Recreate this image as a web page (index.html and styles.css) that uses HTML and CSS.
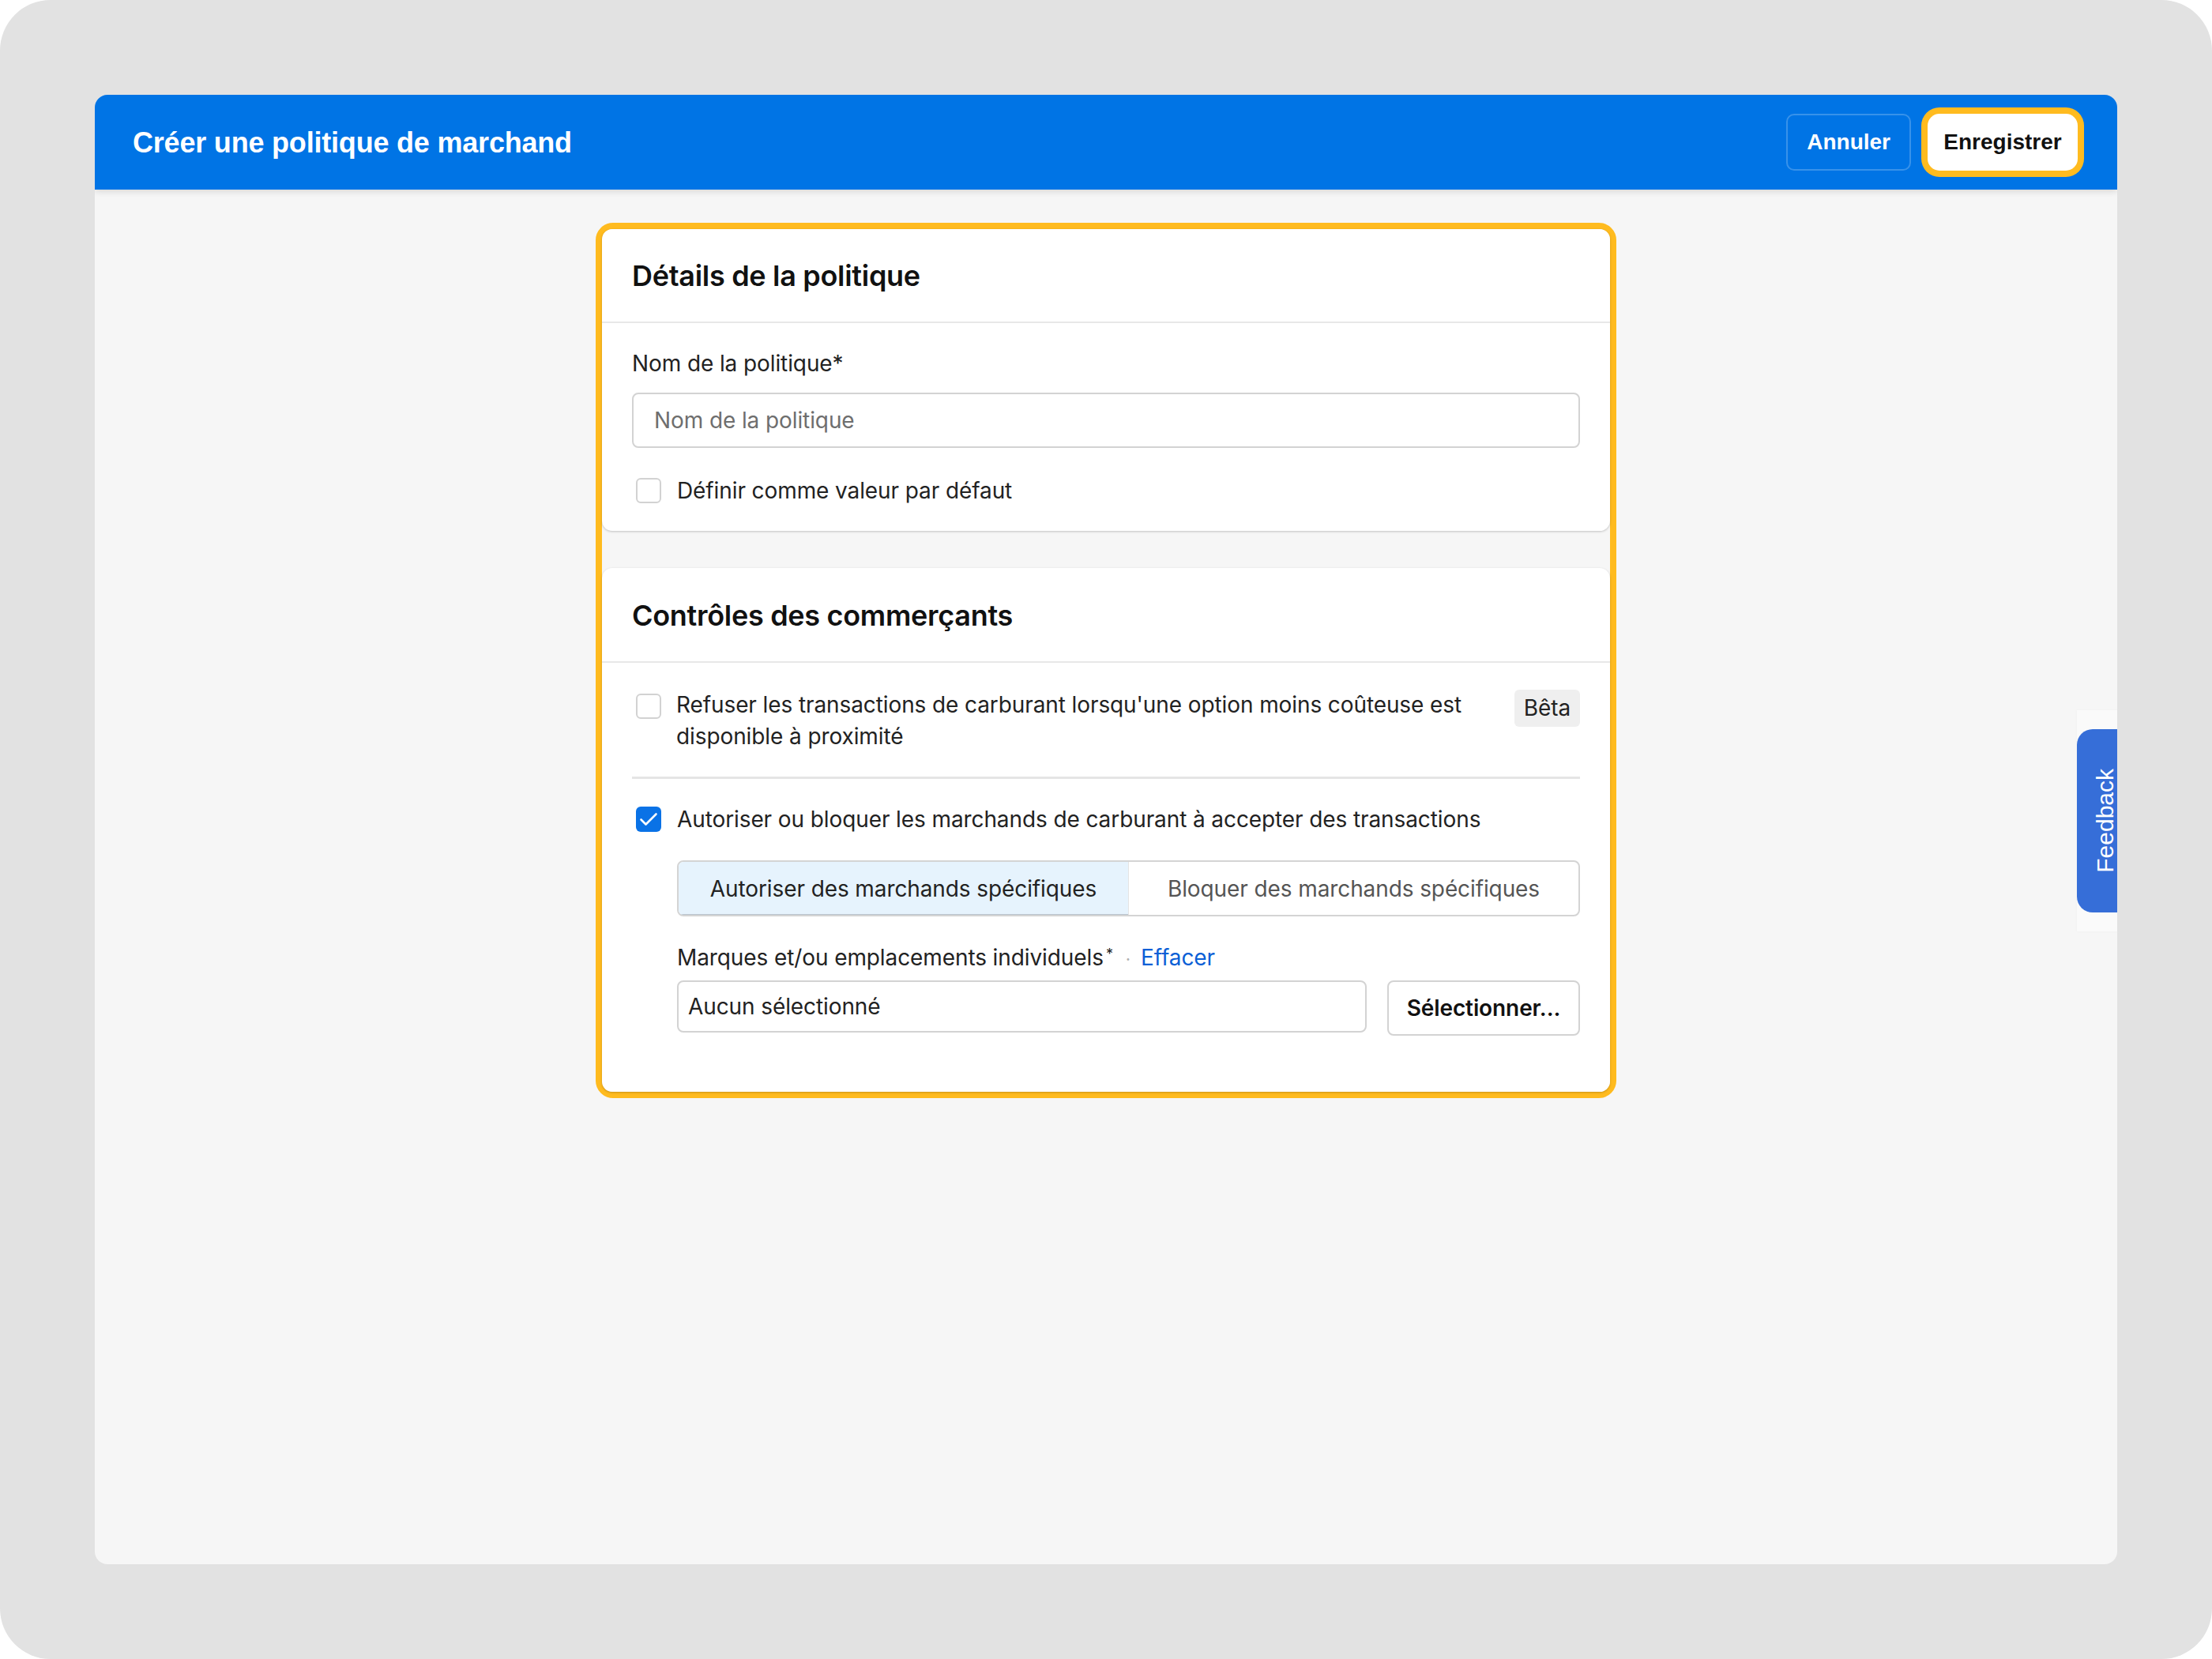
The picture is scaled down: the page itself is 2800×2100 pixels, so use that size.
FILE: index.html
```html
<!DOCTYPE html>
<html lang="fr">
<head>
<meta charset="utf-8">
<title>Créer une politique de marchand</title>
<link rel="stylesheet" href="styles.css">
</head>
<body>
<div class="frame">
  <div class="window">
    <header class="topbar">
      <h1 class="topbar-title">Créer une politique de marchand</h1>
      <div class="actions">
        <button class="btn btn-ghost">Annuler</button>
        <button class="btn btn-save">Enregistrer</button>
      </div>
    </header>

    <main class="content">
      <div class="highlight">
        <section class="card">
          <div class="card-head"><h2>Détails de la politique</h2></div>
          <div class="card-body details-body">
            <div class="field-label">Nom de la politique*</div>
            <div class="text-input placeholder">Nom de la politique</div>
            <div class="check-row default-row">
              <span class="cb"></span>
              <span class="check-text">Définir comme valeur par défaut</span>
            </div>
          </div>
        </section>

        <section class="card card-controls">
          <div class="card-head"><h2>Contrôles des commerçants</h2></div>
          <div class="card-body controls-body">
            <div class="beta-row">
              <span class="cb cb-top"></span>
              <span class="beta-text">Refuser les transactions de carburant lorsqu'une option moins coûteuse est disponible à proximité</span>
              <span class="badge">Bêta</span>
            </div>
            <div class="divider"></div>
            <div class="check-row allow-row">
              <span class="cb cb-checked">
                <svg viewBox="0 0 32 32" width="32" height="32"><polyline points="6.5,16.5 12.5,22.5 25.5,9.5" fill="none" stroke="#fff" stroke-width="2.6" stroke-linecap="round" stroke-linejoin="round"/></svg>
              </span>
              <span class="check-text">Autoriser ou bloquer les marchands de carburant à accepter des transactions</span>
            </div>
            <div class="sub">
              <div class="segmented">
                <div class="seg seg-active">Autoriser des marchands spécifiques</div>
                <div class="seg">Bloquer des marchands spécifiques</div>
              </div>
              <div class="brand-label">Marques et/ou emplacements individuels<sup class="req">*</sup><span class="sep">·</span><span class="link">Effacer</span></div>
              <div class="select-row">
                <div class="text-input select-input">Aucun sélectionné</div>
                <button class="btn-select">Sélectionner...</button>
              </div>
            </div>
          </div>
        </section>
      </div>
    </main>

    <div class="feedback-panel">
      <div class="feedback-tab"><span>Feedback</span></div>
    </div>
  </div>
</div>
</body>
</html>
```

FILE: styles.css
```css
* { box-sizing: border-box; }

html, body {
  margin: 0;
  padding: 0;
  background: #ffffff;
}

body {
  font-family: Inter, "Noto Sans", sans-serif;
  color: #1f1f1f;
  letter-spacing: -0.1px;
}

.frame {
  width: 2800px;
  height: 2100px;
  background: #e2e2e2;
  border-radius: 64px;
  padding: 120px;
}

.window {
  position: relative;
  width: 2560px;
  height: 1860px;
  background: #f6f6f6;
  border-radius: 16px;
  overflow: hidden;
}

/* ---------- top bar ---------- */
.topbar {
  height: 120px;
  background: #0074e5;
  display: flex;
  align-items: center;
  justify-content: space-between;
  padding: 0 50px 0 48px;
  box-shadow: 0 2px 8px rgba(0, 0, 0, 0.14);
  position: relative;
  z-index: 1;
}

.topbar-title {
  margin: 0;
  padding-top: 2px;
  font-family: "Liberation Sans", Arial, sans-serif;
  font-weight: 700;
  font-size: 36px;
  color: #ffffff;
  letter-spacing: -0.2px;
}

.actions {
  display: flex;
  align-items: center;
  gap: 21px;
}

.btn {
  height: 72px;
  font-family: "Liberation Sans", Arial, sans-serif;
  font-weight: 700;
  font-size: 28px;
  letter-spacing: 0;
  cursor: pointer;
}

.btn-ghost {
  padding: 0 24px;
  background: transparent;
  color: #ffffff;
  border: 2px solid rgba(255, 255, 255, 0.22);
  border-radius: 10px;
}

.btn-save {
  width: 190px;
  padding: 0;
  background: #ffffff;
  color: #111111;
  border: none;
  border-radius: 15px;
  box-shadow: 0 0 0 8px #ffbb1f;
}

/* ---------- content ---------- */
.content {
  padding-top: 42px;
}

.highlight {
  width: 1292px;
  margin: 0 auto;
  border: 8px solid #ffbb1f;
  border-radius: 22px;
  background: #f6f6f6;
  display: flex;
  flex-direction: column;
  gap: 47px;
}

.card {
  background: #ffffff;
  border-radius: 13px;
  box-shadow: 0 1px 3px rgba(0, 0, 0, 0.22);
}

.card-head {
  height: 119px;
  padding: 0 38px;
  display: flex;
  align-items: center;
  border-bottom: 2px solid #e8e8e8;
}

.card-head h2 {
  margin: 0;
  font-size: 36px;
  font-weight: 600;
  color: #111111;
  letter-spacing: -0.3px;
}

.card-controls .card-head {
  height: 120px;
  padding-top: 2px;
}

.card-body {
  padding: 0 38px;
}

.details-body {
  padding-top: 33px;
  padding-bottom: 31px;
}

.field-label {
  font-size: 28px;
  line-height: 36px;
  color: #222222;
  margin-bottom: 19px;
}

.text-input {
  height: 70px;
  border: 2px solid #d3d3d3;
  border-radius: 8px;
  display: flex;
  align-items: center;
  padding: 0 26px;
  font-size: 28px;
  color: #222222;
  background: #ffffff;
}

.placeholder {
  color: #6e6e6e;
}

.check-row {
  display: flex;
  align-items: center;
  gap: 20px;
  height: 40px;
  padding-left: 5px;
}

.default-row {
  margin-top: 34px;
}

.check-text {
  font-size: 28px;
  line-height: 40px;
  color: #222222;
}

.cb {
  width: 32px;
  height: 32px;
  flex: 0 0 32px;
  border: 2px solid #d2d2d2;
  border-radius: 6px;
  background: #ffffff;
}

.cb-checked {
  border: none;
  background: #0a72e6;
  display: flex;
}

.cb-checked svg { display: block; }

.controls-body {
  padding-top: 33px;
  padding-bottom: 71px;
}

.beta-row {
  display: flex;
  align-items: flex-start;
  gap: 19px;
  padding-left: 5px;
}

.cb-top {
  margin-top: 6px;
}

.beta-text {
  flex: 1;
  font-size: 28px;
  line-height: 40px;
  color: #222222;
  padding-right: 8px;
}

.badge {
  margin-top: 1px;
  height: 47px;
  padding: 0 12px;
  line-height: 47px;
  background: #efefef;
  border-radius: 6px;
  font-size: 28px;
  color: #222222;
}

.divider {
  height: 3px;
  background: #e5e5e5;
  margin-top: 31px;
}

.allow-row {
  margin-top: 31px;
}

.sub {
  padding-left: 57px;
}

.segmented {
  margin-top: 32px;
  height: 71px;
  display: flex;
  border: 2px solid #d4d4d4;
  border-radius: 8px;
  overflow: hidden;
}

.seg {
  flex: 1;
  display: flex;
  align-items: center;
  justify-content: center;
  font-size: 28px;
  color: #555555;
}

.seg-active {
  background: #e6f3fd;
  color: #222222;
  border-right: 1px solid #e4e4e4;
  box-shadow: inset 0 -1px 0 #b9c4cf;
}

.brand-label {
  margin-top: 32px;
  font-size: 28px;
  line-height: 40px;
  color: #222222;
  display: flex;
  align-items: baseline;
}

.req {
  font-size: 18px;
  line-height: 0;
  position: relative;
  top: -8px;
  margin-left: 3px;
}

.sep {
  color: #b0b0b0;
  font-size: 22px;
  margin: 0 13px 0 16px;
}

.link {
  color: #0b5fd6;
}

.select-row {
  margin-top: 7px;
  display: flex;
  align-items: flex-start;
  gap: 26px;
}

.select-input {
  flex: 1;
  height: 66px;
  padding: 0 12px;
}

.btn-select {
  width: 244px;
  height: 70px;
  border: 2px solid #d3d3d3;
  border-radius: 8px;
  background: #ffffff;
  font-family: Inter, "Noto Sans", sans-serif;
  font-size: 28px;
  font-weight: 600;
  letter-spacing: -0.1px;
  color: #111111;
  padding: 0;
}

/* ---------- feedback tab ---------- */
.feedback-panel {
  position: absolute;
  top: 779px;
  right: 0;
  width: 51px;
  height: 280px;
  background: #fafafa;
  box-shadow: 0 0 3px rgba(0, 0, 0, 0.04);
  display: flex;
  align-items: center;
}

.feedback-tab {
  width: 51px;
  height: 232px;
  background: #366ed8;
  border-radius: 20px 0 0 20px;
  display: flex;
  align-items: center;
  justify-content: flex-end;
  padding-right: 0;
}

.feedback-tab span {
  writing-mode: vertical-rl;
  transform: rotate(180deg);
  font-family: "Liberation Sans", Arial, sans-serif;
  font-size: 30px;
  letter-spacing: 0;
  color: #ffffff;
  line-height: 1;
}
```
